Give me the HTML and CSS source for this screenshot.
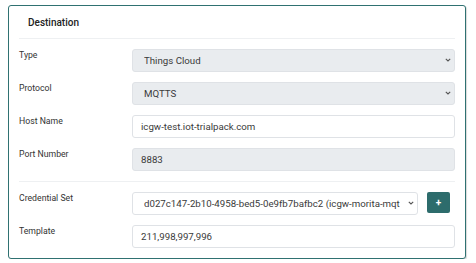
FILE: index.html
```html
<!DOCTYPE html>
<html lang="en">
<head>
    <meta charset="UTF-8">
    <meta name="viewport" content="width=device-width, initial-scale=1.0">
    <title>Destination</title>
    <link rel="stylesheet" href="styles.css">
</head>
<body>
    <div class="card">
        <div class="card-header">Destination</div>

        <div class="field-group">
            <div class="field">
                <label>Type</label>
                <div class="select-wrap">
                    <select class="control locked" disabled>
                        <option>Things Cloud</option>
                    </select>
                    <svg class="chevron" viewBox="0 0 6 4"><path d="M0.8 0.8 L3 3 L5.2 0.8"/></svg>
                </div>
            </div>
            <div class="field">
                <label>Protocol</label>
                <div class="select-wrap">
                    <select class="control locked" disabled>
                        <option>MQTTS</option>
                    </select>
                    <svg class="chevron" viewBox="0 0 6 4"><path d="M0.8 0.8 L3 3 L5.2 0.8"/></svg>
                </div>
            </div>
            <div class="field">
                <label>Host Name</label>
                <input class="control" type="text" value="icgw-test.iot-trialpack.com">
            </div>
            <div class="field">
                <label>Port Number</label>
                <input class="control locked" type="text" value="8883" readonly>
            </div>
        </div>

        <div class="field-group">
            <div class="field">
                <label>Credential Set</label>
                <div class="with-button">
                    <div class="select-wrap">
                        <select class="control narrow">
                            <option>d027c147-2b10-4958-bed5-0e9fb7bafbc2 (icgw-morita-mqt</option>
                        </select>
                        <svg class="chevron" viewBox="0 0 6 4"><path d="M0.8 0.8 L3 3 L5.2 0.8"/></svg>
                    </div>
                    <button class="add-btn">+</button>
                </div>
            </div>
            <div class="field">
                <label>Template</label>
                <input class="control" type="text" value="211,998,997,996">
            </div>
        </div>
    </div>
</body>
</html>
```

FILE: styles.css
```css
body {
    font-family: Roboto, 'Liberation Sans', sans-serif;
    margin: 0;
    padding: 0;
    background: #fff;
    color: #333;
}

.card {
    width: 458px;
    box-sizing: border-box;
    margin: 5px 0 0 8px;
    padding: 0 10px;
    border: 1px solid #2f7171;
    border-radius: 3px;
    box-shadow: 1px 1px 1px rgba(0, 0, 0, 0.15);
    background: #fff;
}

.card-header {
    padding: 10px 9px 8px;
    font-size: 10px;
    line-height: 14px;
    font-weight: 500;
    color: #222;
    border-bottom: 1px solid #eef0f2;
}

.field-group {
    display: flex;
    flex-direction: column;
    gap: 10px;
    padding: 10px 0;
}

.field-group + .field-group {
    border-top: 1px solid #eef0f2;
}

.field {
    display: grid;
    grid-template-columns: 113px 1fr;
    align-items: start;
}

label {
    font-size: 8.7px;
    line-height: 12px;
    color: #333;
}

.control {
    width: 100%;
    height: 23px;
    box-sizing: border-box;
    margin: 0;
    padding: 0 11px;
    border: 1px solid #dfe2e6;
    border-radius: 3px;
    font-family: Roboto, 'Liberation Sans', sans-serif;
    font-size: 9.7px;
    color: #3a3a3a;
    background: #fff;
    outline: none;
}

input.control {
    padding: 0 8px;
}

select.control {
    appearance: none;
    -webkit-appearance: none;
    padding-right: 22px;
    opacity: 1;
}

select.control.narrow {
    padding-right: 8px;
}

.control.locked {
    background: #e9ecef;
    color: #3a3a3a;
}

.select-wrap {
    position: relative;
    flex: 1;
    min-width: 0;
}

.chevron {
    position: absolute;
    right: 4px;
    top: 9px;
    width: 6px;
    height: 4px;
    fill: none;
    stroke: #555;
    stroke-width: 1.1;
}

.with-button {
    display: flex;
    align-items: start;
    gap: 9px;
}

.add-btn {
    width: 23px;
    height: 21px;
    margin-right: 5px;
    padding: 0;
    border: none;
    border-radius: 2px;
    background: #2d6c6c;
    color: #fff;
    font-family: Roboto, 'Liberation Sans', sans-serif;
    font-size: 10px;
    font-weight: bold;
    line-height: 21px;
    cursor: pointer;
}
```
